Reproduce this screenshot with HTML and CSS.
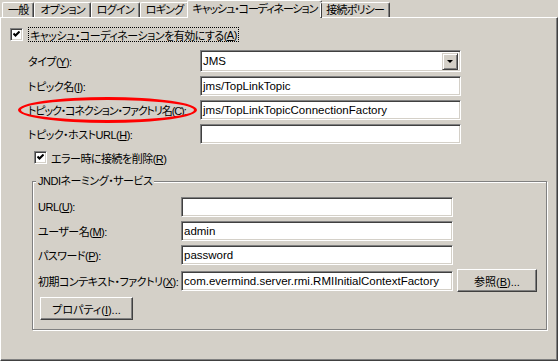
FILE: index.html
```html
<!DOCTYPE html>
<html lang="ja">
<head>
    <meta charset="UTF-8">
    <title>キャッシュ・コーディネーション</title>
    <link rel="stylesheet" href="styles.css">
</head>
<body>
    <div class="tabs">
        <div class="tab">一般</div>
        <div class="tab">オプション</div>
        <div class="tab">ログイン</div>
        <div class="tab">ロギング</div>
        <div class="tab active">キャッシュ・コーディネーション</div>
        <div class="tab">接続ポリシー</div>
    </div>

    <div class="panel">
        <div class="check main">
            <span class="box"><svg width="7" height="7" viewBox="0 0 7 7"><path d="M0.5 2.5 L2.5 4.5 L6.5 0.5" fill="none" stroke="#000" stroke-width="2"/></svg></span>
            <span class="focus">キャッシュ・コーディネーションを有効にする(<u>A</u>)</span>
        </div>

        <div class="fields">
            <span class="lbl">タイプ(<u>Y</u>):</span>
            <div class="select"><span>JMS</span><span class="drop"></span></div>

            <span class="lbl">トピック名(<u>I</u>):</span>
            <div class="input">jms/TopLinkTopic</div>

            <span class="lbl marked">トピック・コネクション・ファクトリ名(<u>C</u>):<span class="ring"></span></span>
            <div class="input">jms/TopLinkTopicConnectionFactory</div>

            <span class="lbl">トピック・ホストURL(<u>H</u>):</span>
            <div class="input"></div>
        </div>

        <div class="check sub">
            <span class="box"><svg width="7" height="7" viewBox="0 0 7 7"><path d="M0.5 2.5 L2.5 4.5 L6.5 0.5" fill="none" stroke="#000" stroke-width="2"/></svg></span>
            <span>エラー時に接続を削除(<u>R</u>)</span>
        </div>

        <fieldset class="group">
            <legend>JNDIネーミング・サービス</legend>
            <div class="gfields">
                <span class="lbl">URL(<u>U</u>):</span>
                <div class="input"></div>
                <span></span>

                <span class="lbl">ユーザー名(<u>M</u>):</span>
                <div class="input">admin</div>
                <span></span>

                <span class="lbl">パスワード(<u>P</u>):</span>
                <div class="input">password</div>
                <span></span>

                <span class="lbl">初期コンテキスト・ファクトリ(<u>X</u>):</span>
                <div class="input">com.evermind.server.rmi.RMIInitialContextFactory</div>
                <button class="btn browse">参照(<u>B</u>)...</button>
            </div>
            <button class="btn props">プロパティ(<u>I</u>)...</button>
        </fieldset>
    </div>
</body>
</html>
```

FILE: styles.css
```css
body {
    margin: 0;
    background: #d4d0c8;
    font-family: "Liberation Sans", "Noto Sans CJK JP", sans-serif;
    font-size: 11px;
    letter-spacing: -0.5px;
    font-feature-settings: "palt";
    color: #000;
}
u {
    text-underline-offset: 1px;
}

/* tab strip */
.tabs {
    display: flex;
    align-items: flex-end;
    height: 17px;
    padding-left: 2px;
    position: relative;
    z-index: 1;
}
.tab {
    height: 15px;
    box-sizing: border-box;
    padding: 0 5px;
    border-top: 1px solid #fff;
    border-left: 1px solid #fff;
    border-right: 1px solid #404040;
    box-shadow: inset -1px 0 #808080;
    border-radius: 2px 2px 0 0;
    display: flex;
    align-items: center;
    line-height: 1;
    letter-spacing: -0.8px;
}
.tab.active {
    height: 18px;
    margin: 0 -2px -1px;
    padding: 0 4px;
    background: #d4d0c8;
    letter-spacing: -1.1px;
}

/* page body */
.panel {
    height: 344px;
    box-sizing: border-box;
    border: 1px solid;
    border-color: #fff #404040 #404040 #fff;
    box-shadow: inset -1px -1px #808080;
    padding: 9px 0 0 9px;
}

.check {
    display: flex;
    align-items: center;
    height: 15px;
    gap: 5px;
}
.check.sub {
    margin: 6px 0 0 24px;
    gap: 4px;
}
.box {
    width: 13px;
    height: 13px;
    box-sizing: border-box;
    background: #fff;
    border: 1px solid;
    border-color: #808080 #fff #fff #808080;
    box-shadow: inset 1px 1px #404040, inset -1px -1px #d4d0c8;
    display: flex;
    align-items: center;
    justify-content: center;
}
.box svg {
    display: block;
}
.focus {
    height: 15px;
    box-sizing: border-box;
    padding: 0 1px;
    border: 1px dotted #000;
    display: flex;
    align-items: center;
}

.fields {
    display: grid;
    grid-template-columns: 172px 261px;
    row-gap: 4px;
    margin: 8px 0 0 18px;
    align-items: center;
}
.lbl {
    white-space: nowrap;
}
.marked {
    position: relative;
    letter-spacing: -1.1px;
}
.ring {
    position: absolute;
    left: -10px;
    top: -5px;
    width: 179px;
    height: 26px;
    box-sizing: border-box;
    border: 3px solid #f00;
    border-radius: 50%;
}

.input, .select {
    height: 20px;
    box-sizing: border-box;
    background: #fff;
    border: 1px solid;
    border-color: #808080 #fff #fff #808080;
    box-shadow: inset 1px 1px #404040, inset -1px -1px #d4d0c8;
    padding: 0 2px;
    display: flex;
    align-items: center;
    white-space: nowrap;
    overflow: hidden;
    font-size: 11.5px;
    letter-spacing: 0;
}
.select {
    height: 22px;
    justify-content: space-between;
    padding: 2px;
}
.drop {
    width: 16px;
    height: 17px;
    box-sizing: border-box;
    background: #d4d0c8;
    border: 1px solid;
    border-color: #d4d0c8 #404040 #404040 #d4d0c8;
    box-shadow: inset 1px 1px #fff, inset -1px -1px #808080;
    display: flex;
    align-items: center;
    justify-content: center;
}
.drop::after {
    content: "";
    border-left: 3px solid transparent;
    border-right: 3px solid transparent;
    border-top: 3px solid #000;
}

/* JNDI group */
.group {
    width: 515px;
    box-sizing: border-box;
    margin: 9px 0 0 22px;
    padding: 0 0 9px 5px;
    border: 1px solid #808080;
    box-shadow: inset 1px 1px #fff, 1px 1px #fff;
}
.group legend {
    margin-left: -2px;
    padding: 0 2px;
    background: #d4d0c8;
    line-height: 15px;
}
.gfields {
    display: grid;
    grid-template-columns: 143px 272px 84px;
    row-gap: 4px;
    margin-top: 8px;
    align-items: center;
}

.btn {
    height: 23px;
    box-sizing: border-box;
    font: inherit;
    color: #000;
    background: #d4d0c8;
    border: 1px solid;
    border-color: #fff #404040 #404040 #fff;
    box-shadow: inset -1px -1px #808080;
    padding: 0;
}
.browse {
    width: 80px;
    justify-self: end;
}
.props {
    width: 93px;
    margin: 5px 0 0 2px;
}
```
